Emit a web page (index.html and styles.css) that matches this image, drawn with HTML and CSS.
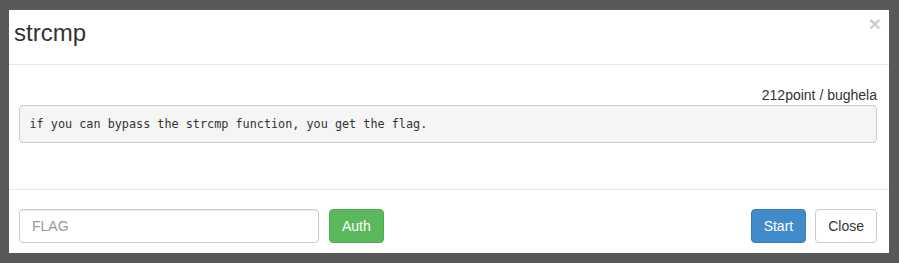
FILE: index.html
```
<!DOCTYPE html>
<html>
<head>
<meta charset="utf-8">
<link rel="stylesheet" href="styles.css">
</head>
<body>
<div class="modal">
  <div class="modal-header">
    <h4 class="modal-title">strcmp</h4>
    <button class="close" type="button">&times;</button>
  </div>
  <div class="modal-body">
    <div class="meta">212point / bughela</div>
    <pre class="desc">if you can bypass the strcmp function, you get the flag.</pre>
  </div>
  <div class="modal-footer">
    <div class="auth-group">
      <input class="flag-input" type="text" placeholder="FLAG">
      <button class="btn btn-success" type="button">Auth</button>
    </div>
    <div class="actions">
      <button class="btn btn-primary" type="button">Start</button>
      <button class="btn btn-default" type="button">Close</button>
    </div>
  </div>
</div>
</body>
</html>
```
FILE: styles.css
```
html, body {
  margin: 0;
  height: 100%;
}
body {
  background: #595959;
  padding: 10px 10px 0 9px;
  box-sizing: border-box;
  font-family: "Liberation Sans", Arial, sans-serif;
  font-size: 14px;
  line-height: 20px;
  color: #333;
}
.modal {
  background: #fff;
  width: 880px;
}
.modal-header {
  display: flex;
  justify-content: space-between;
  align-items: flex-start;
  height: 55px;
  box-sizing: border-box;
  padding: 9px 8px 0 5px;
  border-bottom: 1px solid #e5e5e5;
}
.modal-title {
  margin: 0;
  font-size: 24px;
  line-height: 27px;
  font-weight: normal;
  color: #333;
}
.close {
  margin: -6px 0 0 0;
  padding: 0;
  border: 0;
  background: transparent;
  font-family: "Liberation Sans", Arial, sans-serif;
  font-size: 21px;
  font-weight: bold;
  line-height: 1;
  color: #000;
  opacity: 0.2;
  cursor: pointer;
}
.modal-body {
  padding: 20px 12px 46px 10px;
}
.meta {
  text-align: right;
}
.desc {
  margin: 0;
  padding: 10px 9.5px 8px;
  height: 38px;
  box-sizing: border-box;
  background: #f5f5f5;
  border: 1px solid #ccc;
  border-radius: 4px;
  font-family: "DejaVu Sans Mono", Consolas, monospace;
  font-size: 11.8px;
  line-height: 17px;
  color: #333;
  white-space: pre;
}
.modal-footer {
  display: flex;
  justify-content: space-between;
  align-items: center;
  border-top: 1px solid #e5e5e5;
  padding: 19px 12px 10px 10px;
}
.auth-group, .actions {
  display: flex;
  align-items: center;
}
.auth-group {
  gap: 10px;
}
.actions {
  gap: 9px;
}
.flag-input {
  width: 300px;
  height: 34px;
  box-sizing: border-box;
  padding: 6px 12px;
  border: 1px solid #ccc;
  border-radius: 4px;
  font-family: "Liberation Sans", Arial, sans-serif;
  font-size: 14px;
  line-height: 20px;
  color: #555;
  box-shadow: inset 0 1px 1px rgba(0,0,0,.075);
  outline: none;
}
.flag-input::placeholder {
  color: #999;
}
.btn {
  height: 34px;
  box-sizing: border-box;
  padding: 6px 12px;
  border: 1px solid transparent;
  border-radius: 4px;
  font-family: "Liberation Sans", Arial, sans-serif;
  font-size: 14px;
  line-height: 20px;
  cursor: pointer;
}
.btn-success {
  background: #5cb85c;
  border-color: #4cae4c;
  color: #fff;
}
.btn-primary {
  background: #428bca;
  border-color: #357ebd;
  color: #fff;
}
.btn-default {
  background: #fff;
  border-color: #ccc;
  color: #333;
}
```
